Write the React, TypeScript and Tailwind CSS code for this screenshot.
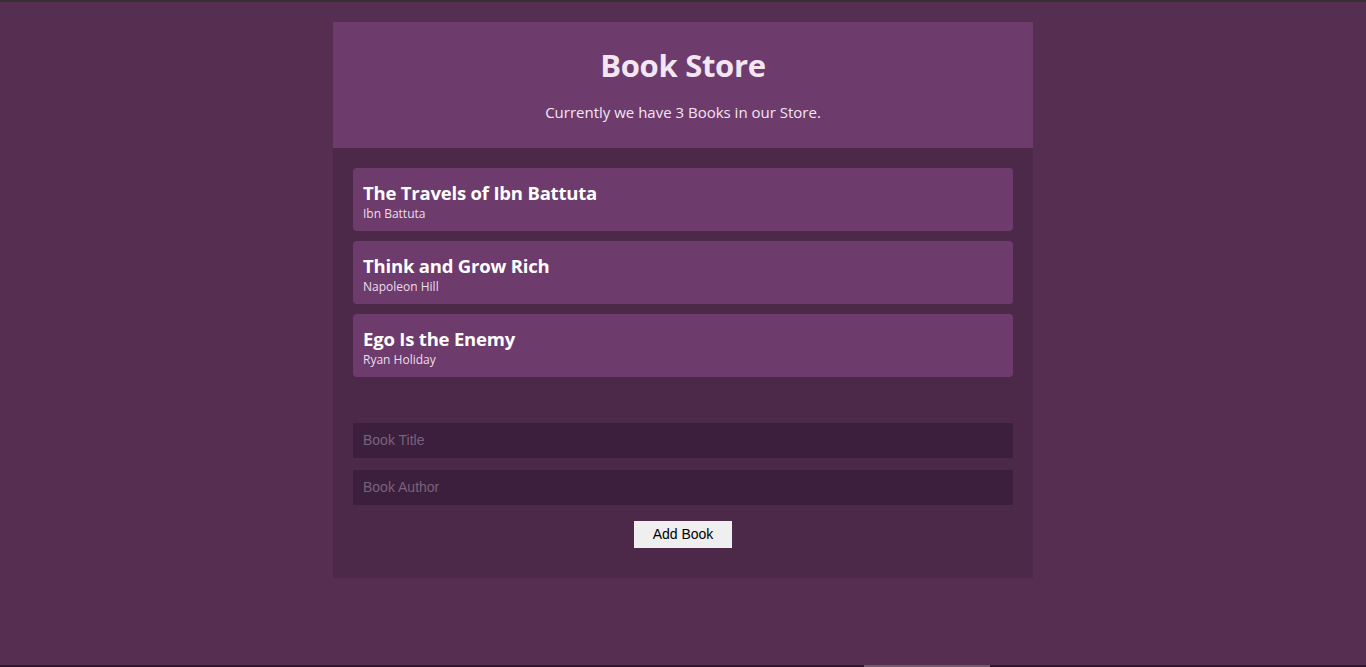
import React from "react";

const books = [
  { title: "The Travels of Ibn Battuta", author: "Ibn Battuta" },
  { title: "Think and Grow Rich", author: "Napoleon Hill" },
  { title: "Ego Is the Enemy", author: "Ryan Holiday" },
];

export default function App() {
  return (
    <div
      className="min-h-[667px] h-[667px] bg-[#552e52] border-t-2 border-[#363036] flex flex-col"
      style={{ fontFamily: '"Open Sans", "Noto Sans", sans-serif' }}
    >
      <div className="flex-1 pt-[20px]">
        <div className="w-[700px] mx-auto">
          <div className="bg-[#6e3b6d] h-[126px] flex flex-col items-center text-[#f3e6f2]">
            <h1 className="text-[31px] font-bold leading-none mt-[28px] tracking-[-0.3px]">Book Store</h1>
            <p className="text-[15px] leading-none mt-[24px]">Currently we have 3 Books in our Store.</p>
          </div>
          <div className="bg-[#4d2949] px-[20px] pt-[20px] pb-[30px]">
            <div className="flex flex-col gap-[10px]">
              {books.map((b) => (
                <div key={b.title} className="bg-[#6e3b6d] rounded-[4px] h-[63px] px-[10px] pt-[14px]">
                  <div className="text-white font-bold text-[18.5px] leading-[22px] tracking-[-0.2px]">{b.title}</div>
                  <div className="text-[#ecdeeb] text-[12px] leading-[16px] mt-[2px]">{b.author}</div>
                </div>
              ))}
            </div>
            <div className="mt-[46px] flex flex-col gap-[12px]">
              <input
                placeholder="Book Title"
                className="h-[35px] bg-[#3c1f3c] px-[10px] pb-[1px] text-[14px] text-white placeholder:text-[#7a627a] outline-none"
                style={{ fontFamily: '"Liberation Sans", Arial, sans-serif' }}
              />
              <input
                placeholder="Book Author"
                className="h-[35px] bg-[#3c1f3c] px-[10px] pb-[1px] text-[14px] text-white placeholder:text-[#7a627a] outline-none"
                style={{ fontFamily: '"Liberation Sans", Arial, sans-serif' }}
              />
            </div>
            <div className="flex justify-center mt-[16px]">
              <button
                className="w-[98px] h-[27px] bg-[#efefef] text-[14px] text-black"
                style={{ fontFamily: '"Liberation Sans", Arial, sans-serif' }}
              >
                Add Book
              </button>
            </div>
          </div>
        </div>
      </div>
      <div className="h-[2px] bg-[#2a1a28] relative">
        <div className="absolute left-[864px] w-[126px] top-0 h-[2px] bg-[#6a5f69]" />
      </div>
    </div>
  );
}
